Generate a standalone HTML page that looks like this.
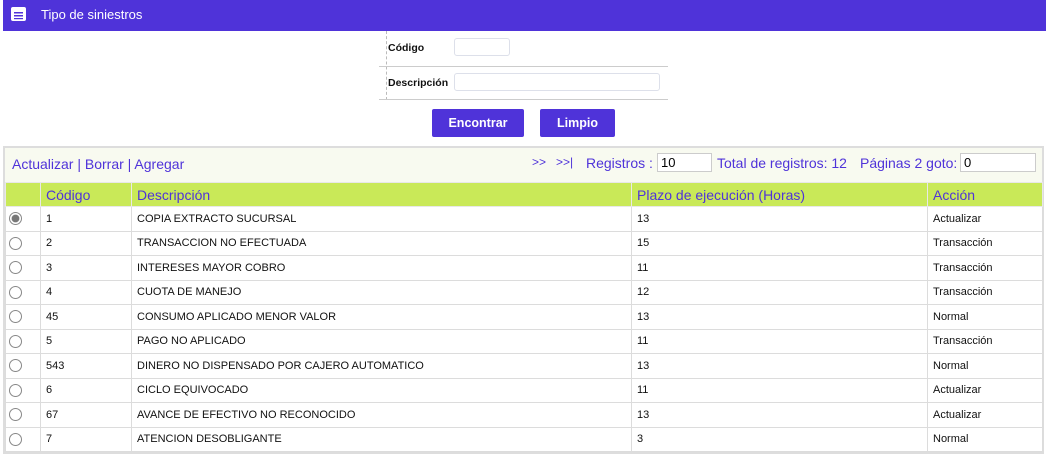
<!DOCTYPE html>
<html><head><meta charset="utf-8"><style>
*{box-sizing:border-box;margin:0;padding:0}
body{width:1046px;height:460px;background:#fff;font-family:"Liberation Sans",Arial,sans-serif;position:relative;overflow:hidden}
.a{position:absolute}
.hdr{left:3px;top:0;width:1043px;height:31px;background:#4f33d9;color:#fff;font-size:13px}
.lbl{font-size:10.5px;font-weight:bold;color:#111}
.inp{border:1px solid #dde0ea;border-radius:3px;background:#fff}
.btn{background:#4f33d9;color:#fff;font-size:12.5px;font-weight:bold;text-align:center;line-height:28px;border-radius:2px}
table{border-collapse:collapse;font-size:11px;color:#111}
td{border:1px solid #dcdcdc;height:24.5px;padding:0 0 0 5px}
th{border:1px solid #e8e8e8;background:#c9e958;color:#4f33d9;font-size:14px;font-weight:normal;text-align:left;padding-left:5px;height:24px}
.r{display:inline-block;width:13px;height:13px;border:1px solid #888;border-radius:50%;margin-left:-1px;vertical-align:middle;background:#fff}
.p{color:#4f33d9;font-size:14px}
.pi{border:1px solid #ccc;background:#fff;height:19px;font-size:13px;padding-left:3px;line-height:17px}
</style></head><body>
<div class="a hdr">
<svg class="a" style="left:7px;top:6px" width="17" height="16" viewBox="0 0 17 16"><rect x="1" y="1" width="15" height="14" rx="2" fill="#fff"/><rect x="4" y="6" width="9" height="1.5" fill="#4f33d9"/><rect x="4" y="9" width="9" height="1.5" fill="#4f33d9"/><rect x="4" y="12" width="9" height="1.2" fill="#4f33d9"/></svg>
<span class="a" style="left:38px;top:7px">Tipo de siniestros</span></div>

<div class="a" style="left:386px;top:31px;height:69px;border-left:1px dashed #bbb"></div>
<div class="a" style="left:379px;top:66px;width:289px;border-top:1px solid #ccc"></div>
<div class="a" style="left:379px;top:99px;width:289px;border-top:1px solid #ccc"></div>
<div class="a lbl" style="left:388px;top:42px">Código</div>
<div class="a inp" style="left:454px;top:38px;width:56px;height:18px"></div>
<div class="a lbl" style="left:388px;top:77px">Descripción</div>
<div class="a inp" style="left:454px;top:73px;width:206px;height:18px"></div>
<div class="a btn" style="left:432px;top:109px;width:92px;height:28px">Encontrar</div>
<div class="a btn" style="left:540px;top:109px;width:75px;height:28px">Limpio</div>

<div class="a" style="left:3px;top:146px;width:1041px;height:308px;border:2px solid #ddd;background:#f8faf0"></div>
<div class="a p" style="left:12px;top:156px">Actualizar | Borrar | Agregar</div>
<div class="a p" style="left:532px;top:155px;font-size:12px">&gt;&gt;&nbsp;&nbsp; &gt;&gt;|</div>
<div class="a p" style="left:586px;top:155px">Registros :</div>
<div class="a pi" style="left:657px;top:153px;width:55px">10</div>
<div class="a p" style="left:717px;top:155px">Total de registros: 12</div>
<div class="a p" style="left:860px;top:155px">Páginas 2 goto:</div>
<div class="a pi" style="left:960px;top:153px;width:76px">0</div>

<table class="a" style="left:5px;top:182px;width:1038px;background:#fff">
<tr><th style="width:35px"></th><th style="width:91px">Código</th><th style="width:500px">Descripción</th><th style="width:296px">Plazo de ejecución (Horas)</th><th>Acción</th></tr>
<tr><td style="padding-left:4px"><span class="r" style="background:radial-gradient(#777 45%,#fff 55%)"></span></td><td>1</td><td>COPIA EXTRACTO SUCURSAL</td><td>13</td><td>Actualizar</td></tr>
<tr><td style="padding-left:4px"><span class="r"></span></td><td>2</td><td>TRANSACCION NO EFECTUADA</td><td>15</td><td>Transacción</td></tr>
<tr><td style="padding-left:4px"><span class="r"></span></td><td>3</td><td>INTERESES MAYOR COBRO</td><td>11</td><td>Transacción</td></tr>
<tr><td style="padding-left:4px"><span class="r"></span></td><td>4</td><td>CUOTA DE MANEJO</td><td>12</td><td>Transacción</td></tr>
<tr><td style="padding-left:4px"><span class="r"></span></td><td>45</td><td>CONSUMO APLICADO MENOR VALOR</td><td>13</td><td>Normal</td></tr>
<tr><td style="padding-left:4px"><span class="r"></span></td><td>5</td><td>PAGO NO APLICADO</td><td>11</td><td>Transacción</td></tr>
<tr><td style="padding-left:4px"><span class="r"></span></td><td>543</td><td>DINERO NO DISPENSADO POR CAJERO AUTOMATICO</td><td>13</td><td>Normal</td></tr>
<tr><td style="padding-left:4px"><span class="r"></span></td><td>6</td><td>CICLO EQUIVOCADO</td><td>11</td><td>Actualizar</td></tr>
<tr><td style="padding-left:4px"><span class="r"></span></td><td>67</td><td>AVANCE DE EFECTIVO NO RECONOCIDO</td><td>13</td><td>Actualizar</td></tr>
<tr><td style="padding-left:4px"><span class="r"></span></td><td>7</td><td>ATENCION DESOBLIGANTE</td><td>3</td><td>Normal</td></tr>
</table>
</body></html>
